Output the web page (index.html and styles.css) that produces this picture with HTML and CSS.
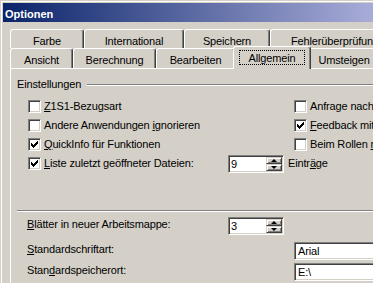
FILE: index.html
```html
<!DOCTYPE html>
<html lang="de">
<head>
    <meta charset="UTF-8">
    <title>Optionen</title>
    <link rel="stylesheet" href="styles.css">
</head>
<body>
    <div class="window">
        <div class="titlebar">Optionen</div>
        <div class="dialog">
            <div class="tabrow">
                <div class="tab tab-farbe">Farbe</div>
                <div class="tab tab-international">International</div>
                <div class="tab tab-speichern">Speichern</div>
                <div class="tab tab-fehler">Fehlerüberprüfung</div>
            </div>
            <div class="tabrow front">
                <div class="tab tab-ansicht">Ansicht</div>
                <div class="tab tab-berechnung">Berechnung</div>
                <div class="tab tab-bearbeiten">Bearbeiten</div>
                <div class="tab tab-allgemein active"><span class="focus">Allgemein</span></div>
                <div class="tab tab-umsteigen">Umsteigen</div>
            </div>

            <div class="panel">
                <div class="legend">
                    <span>Einstellungen</span>
                    <div class="etch"></div>
                </div>

                <div class="options">
                    <div class="check"><span class="box"></span><span><u>Z</u>1S1-Bezugsart</span></div>
                    <div class="check"><span class="box"></span><span>Anfrage nach Dateieigenschaften</span></div>
                    <div class="check"><span class="box"></span><span>Andere Anwendungen <u>i</u>gnorieren</span></div>
                    <div class="check">
                        <span class="box"><svg width="9" height="9" viewBox="0 0 9 9"><path d="M1 3h1v3H1z M2 4h1v3H2z M3 5h1v3H3z M4 4h1v3H4z M5 3h1v3H5z M6 2h1v3H6z M7 1h1v3H7z" fill="#000"/></svg></span>
                        <span><u>F</u>eedback mit Sound</span>
                    </div>
                    <div class="check">
                        <span class="box"><svg width="9" height="9" viewBox="0 0 9 9"><path d="M1 3h1v3H1z M2 4h1v3H2z M3 5h1v3H3z M4 4h1v3H4z M5 3h1v3H5z M6 2h1v3H6z M7 1h1v3H7z" fill="#000"/></svg></span>
                        <span><u>Q</u>uickInfo für Funktionen</span>
                    </div>
                    <div class="check"><span class="box"></span><span>Beim Rollen <u>m</u>it IntelliMouse zoomen</span></div>
                    <div class="check wide">
                        <span class="box"><svg width="9" height="9" viewBox="0 0 9 9"><path d="M1 3h1v3H1z M2 4h1v3H2z M3 5h1v3H3z M4 4h1v3H4z M5 3h1v3H5z M6 2h1v3H6z M7 1h1v3H7z" fill="#000"/></svg></span>
                        <span class="list-label"><u>L</u>iste zuletzt geöffneter Dateien:</span>
                        <div class="spin">
                            <span class="val">9</span>
                            <div class="btns">
                                <div class="btn"><i class="up"></i></div>
                                <div class="btn"><i class="down"></i></div>
                            </div>
                        </div>
                        <span class="unit">Eintr<u>ä</u>ge</span>
                    </div>
                </div>

                <div class="sep"></div>

                <div class="field-row first">
                    <span class="label short"><u>B</u>lätter in neuer Arbeitsmappe:</span>
                    <div class="spin">
                        <span class="val">3</span>
                        <div class="btns">
                            <div class="btn"><i class="up"></i></div>
                            <div class="btn"><i class="down"></i></div>
                        </div>
                    </div>
                </div>
                <div class="field-row second">
                    <span class="label"><u>S</u>tandardschriftart:</span>
                    <div class="field">Arial</div>
                </div>
                <div class="field-row third">
                    <span class="label">Stan<u>d</u>ardspeicherort:</span>
                    <div class="field">E:\</div>
                </div>
            </div>
        </div>
    </div>
</body>
</html>
```

FILE: styles.css
```css
* {
    margin: 0;
    padding: 0;
    box-sizing: border-box;
}
body {
    width: 373px;
    height: 283px;
    overflow: hidden;
    background: #d4d0c8;
    color: #000;
    font-family: "Liberation Sans", Arial, sans-serif;
    font-size: 11px;
    letter-spacing: -0.15px;
}
.window {
    width: 480px;
    height: 300px;
    background: #d4d0c8;
    border-top: 1px solid #d4d0c8;
    border-left: 1px solid #d4d0c8;
    padding: 2px 0 0 2px;
    box-shadow: inset 1px 1px #fff;
}
.titlebar {
    height: 19px;
    padding: 5px 0 0 2px;
    line-height: 13px;
    color: #fff;
    font-weight: bold;
    letter-spacing: 0;
    background: linear-gradient(to right, #0a246a 0, #a8acd8 370px, #b4c4ec 478px);
}
.dialog {
    padding: 7px 0 0 7px;
}

/* Registerkarten */
.tabrow {
    display: flex;
    height: 19px;
    white-space: nowrap;
}
.tabrow.front {
    height: 20px;
}
.tab {
    height: 100%;
    padding-top: 5px;
    line-height: 13px;
    text-align: center;
    background: #d4d0c8;
    border-top: 1px solid #fff;
    border-left: 1px solid #fff;
    border-right: 1px solid #404040;
    border-radius: 3px 3px 0 0;
    box-shadow: inset -1px 0 #808080;
}
.tab-farbe { width: 74px; }
.tab-international { width: 100px; }
.tab-speichern { width: 86px; }
.tab-fehler { width: 130px; }
.tab-ansicht { width: 63px; }
.tab-berechnung { width: 83px; }
.tab-bearbeiten { width: 79px; }
.tab-allgemein { width: 74px; }
.tab-umsteigen { width: 70px; }
.tab.active {
    position: relative;
    z-index: 1;
    width: 78px;
    height: 23px;
    margin: -2px -2px -1px;
    padding-top: 3px;
}
.focus {
    display: inline-block;
    border: 1px dotted #000;
    padding: 1px 9px 0;
    line-height: 12px;
}

/* Hauptbereich */
.panel {
    height: 230px;
    padding: 9px 0 0 6px;
    border-top: 1px solid #fff;
    border-left: 1px solid #fff;
}
.legend {
    display: flex;
    align-items: center;
    height: 13px;
    line-height: 13px;
}
.etch {
    flex: 1;
    height: 2px;
    margin-left: 6px;
    border-top: 1px solid #808080;
    border-bottom: 1px solid #fff;
}
.options {
    display: grid;
    grid-template-columns: 266px auto;
    grid-auto-rows: 19px;
    margin: 6px 0 0 11px;
}
.check {
    display: flex;
    align-items: center;
    white-space: nowrap;
    line-height: 13px;
}
.check.wide {
    grid-column: 1 / span 2;
}
.box {
    display: flex;
    align-items: center;
    justify-content: center;
    width: 13px;
    height: 13px;
    margin-right: 3px;
    background: #fff;
    border: 1px solid;
    border-color: #808080 #fff #fff #808080;
    box-shadow: inset 1px 1px #404040, inset -1px -1px #d4d0c8;
}
.box svg {
    display: block;
    shape-rendering: crispEdges;
}
.list-label {
    width: 184px;
}
.unit {
    margin-left: 4px;
}

/* Drehfelder und Eingabefelder */
.spin {
    display: flex;
    width: 56px;
    height: 18px;
    background: #fff;
    border: 1px solid;
    border-color: #808080 #fff #fff #808080;
    box-shadow: inset 1px 1px #404040, inset -1px -1px #d4d0c8;
    padding: 1px;
}
.spin .val {
    flex: 1;
    padding-left: 1px;
    line-height: 14px;
}
.btns {
    display: flex;
    flex-direction: column;
    width: 16px;
}
.btn {
    flex: 1;
    display: flex;
    align-items: center;
    justify-content: center;
    background: #d4d0c8;
    border: 1px solid;
    border-color: #d4d0c8 #404040 #404040 #d4d0c8;
    box-shadow: inset 1px 1px #fff, inset -1px -1px #808080;
}
.up, .down {
    width: 0;
    height: 0;
    border-left: 3px solid transparent;
    border-right: 3px solid transparent;
}
.up {
    border-bottom: 3px solid #000;
}
.down {
    border-top: 3px solid #000;
}
.sep {
    height: 2px;
    margin-top: 37px;
    border-top: 1px solid #808080;
    border-bottom: 1px solid #fff;
}
.field-row {
    display: flex;
    margin-left: 10px;
    white-space: nowrap;
}
.field-row.first { margin-top: 5px; }
.field-row.second { margin-top: 7px; }
.field-row.third { margin-top: 3px; }
.label {
    width: 267px;
    padding-top: 1px;
    line-height: 13px;
}
.label.short {
    width: 201px;
}
.field {
    width: 120px;
    height: 18px;
    padding: 1px 0 0 3px;
    line-height: 14px;
    background: #fff;
    border: 1px solid;
    border-color: #808080 #fff #fff #808080;
    box-shadow: inset 1px 1px #404040, inset -1px -1px #d4d0c8;
}
```
